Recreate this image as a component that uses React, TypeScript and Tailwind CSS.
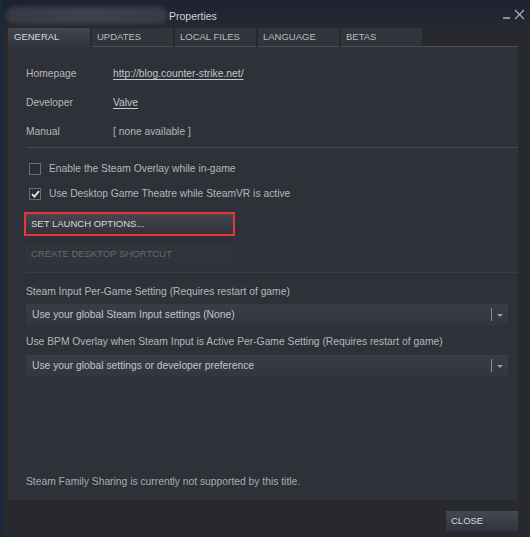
const tabs = ["GENERAL", "UPDATES", "LOCAL FILES", "LANGUAGE", "BETAS"]

function Row({ label, children }: { label: string; children: React.ReactNode }) {
  return (
    <div className="flex h-[29px] items-center">
      <span className="w-[87px] shrink-0">{label}</span>
      {children}
    </div>
  )
}

function Select({ value }: { value: string }) {
  return (
    <div className="flex h-[21px] items-center bg-gradient-to-b from-[#3a3d45] to-[#33363e] pl-[6px] text-[#c2c5c9]">
      <span className="flex-1">{value}</span>
      <span className="h-[13px] w-px bg-[#8a8d92]" />
      <span className="flex w-[16px] justify-center">
        <span className="mt-[2px] block h-0 w-0 border-x-[3px] border-t-[3px] border-x-transparent border-t-[#9a9da2]" />
      </span>
    </div>
  )
}

export default function App() {
  return (
    <div
      className="flex h-[537px] w-[530px] flex-col border-l-[3px] border-l-[#1a2a3c] bg-[#27292f] text-[10.3px] text-[#b4b7bb]"
      style={{ fontFamily: '"Liberation Sans", Arial, sans-serif' }}
    >
      {/* title bar */}
      <div className="relative flex h-[28px] items-center bg-gradient-to-b from-[#1c2230] to-[#262930]">
        <div className="ml-[3px] mt-[3px] h-[17px] w-[162px] rounded-full bg-gradient-to-r from-[#383d49] via-[#414551] to-[#3a3e4a] opacity-90 blur-[2px]" />
        <span className="absolute left-[166px] top-[9px] text-[10.5px] text-[#d0d3d6]">Properties</span>
        <div className="ml-auto mr-[5px] flex items-end gap-[4px]">
          <span className="mb-[1px] block h-[2px] w-[7px] bg-[#8c8f95]" />
          <svg width="11" height="11" viewBox="0 0 11 11" stroke="#a9acb1" strokeWidth="1.3">
            <path d="M1 1 L10 10 M10 1 L1 10" />
          </svg>
        </div>
      </div>

      {/* tabs */}
      <div className="flex h-[19px] pl-[5px] pr-[12px]">
        {tabs.map((t, i) => (
          <div
            key={t}
            className={
              i === 0
                ? "flex w-[82px] items-center bg-gradient-to-b from-[#43464f] to-[#31343b] pl-[6px] text-[9.5px] text-[#d6d8db]"
                : "ml-[2px] flex w-[81px] items-center border-b border-b-[#4a4d54] bg-[#31343b] pl-[5px] text-[9.5px] text-[#b9bcc0]"
            }
          >
            {t}
          </div>
        ))}
        <div className="flex-1 border-b border-b-[#4a4d54]" />
      </div>

      {/* panel */}
      <div className="ml-[5px] mr-[12px] flex h-[453px] flex-col bg-[#2e3138] pl-[18px] pr-[10px] pt-[12px]">
        <Row label="Homepage">
          <span className="text-[#c3c6ca] underline underline-offset-2">http://blog.counter-strike.net/</span>
        </Row>
        <Row label="Developer">
          <span className="text-[#c3c6ca] underline underline-offset-2">Valve</span>
        </Row>
        <Row label="Manual">
          <span>[ none available ]</span>
        </Row>
        <div className="-mr-[10px] mt-[1px] h-px bg-[#44474e]" />

        <div className="mt-[13px] flex items-center gap-[8px]">
          <span className="ml-[3px] block h-[12px] w-[12px] border border-[#6a6d73] bg-[#2a2d33]" />
          <span>Enable the Steam Overlay while in-game</span>
        </div>
        <div className="mt-[10px] flex items-center gap-[8px]">
          <span className="ml-[3px] flex h-[12px] w-[12px] items-center justify-center border border-[#6a6d73] bg-[#2a2d33]">
            <svg width="9" height="8" viewBox="0 0 9 8" fill="none" stroke="#e6e8ea" strokeWidth="1.8">
              <path d="M1 4.2 L3.4 6.6 L8 1.2" />
            </svg>
          </span>
          <span>Use Desktop Game Theatre while SteamVR is active</span>
        </div>

        <div className="ml-[-2px] mt-[10px] w-[211px] border-2 border-[#e9343a]">
          <div className="flex h-[20px] items-center bg-gradient-to-b from-[#444750] to-[#30333a] pl-[5px] text-[9.5px] text-[#d8dadd]">
            SET LAUNCH OPTIONS...
          </div>
        </div>
        <div className="mt-[8px] flex h-[20px] w-[207px] items-center bg-[#31343b] pl-[5px] text-[9.5px] text-[#676a70]">
          CREATE DESKTOP SHORTCUT
        </div>
        <div className="-mr-[10px] mt-[8px] h-px bg-[#3a3d44]" />

        <div className="mt-[11px]">Steam Input Per-Game Setting (Requires restart of game)</div>
        <div className="mt-[5px]">
          <Select value="Use your global Steam Input settings (None)" />
        </div>
        <div className="mt-[9px]">Use BPM Overlay when Steam Input is Active Per-Game Setting (Requires restart of game)</div>
        <div className="mt-[5px]">
          <Select value="Use your global settings or developer preference" />
        </div>

        <div className="mb-[11px] mt-auto text-[#a9acb0]">Steam Family Sharing is currently not supported by this title.</div>
      </div>

      {/* footer */}
      <div className="mr-[12px] mt-[11px] flex justify-end">
        <div className="flex h-[20px] w-[72px] items-center bg-gradient-to-b from-[#464952] to-[#30333a] pl-[5px] text-[9.5px] text-[#d6d8db]">
          CLOSE
        </div>
      </div>
    </div>
  )
}
